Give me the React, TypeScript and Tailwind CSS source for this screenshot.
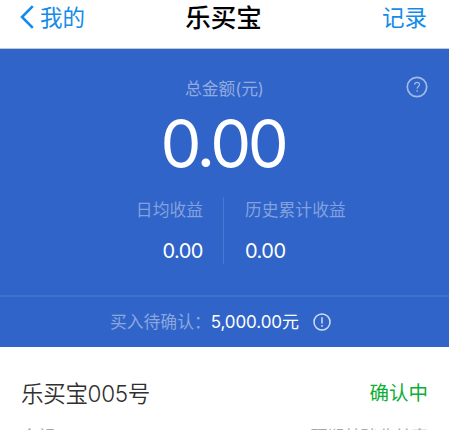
import React from 'react';

const BackIcon: React.FC = () => (
  <svg width="14" height="24" viewBox="0 0 14 24" fill="none" stroke="#148bea" strokeWidth="2.6">
    <path d="M12.8 1.2 2 12l10.8 10.8" />
  </svg>
);

const HelpIcon: React.FC = () => (
  <svg width="22" height="22" viewBox="0 0 22 22" fill="none" stroke="#a3b9e6" strokeWidth="1.7">
    <circle cx="11" cy="11" r="9.7" />
    <path d="M8.6 8.8c0-1.5 1-2.4 2.5-2.4s2.4.9 2.4 2.2c0 1.9-2.4 2-2.4 4.2" strokeWidth="1.2" />
    <path d="M11.1 14.3v1.5" strokeWidth="1.4" />
  </svg>
);

const NoticeIcon: React.FC = () => (
  <svg width="18" height="18" viewBox="0 0 18 18" fill="none" stroke="#d3def4" strokeWidth="1.5">
    <circle cx="9" cy="9" r="8" />
    <path d="M9 4.2v6.2M9 12v1.7" />
  </svg>
);

const App: React.FC = () => {
  return (
    <div className="h-[430px] w-[456px] overflow-hidden bg-white font-['Inter','Noto_Sans_CJK_SC',sans-serif]">
      <div className="w-[449px]">
        {/* Navigation */}
        <header className="grid h-[49px] grid-cols-3 border-b border-[#c3c8d4] pr-[22px] pl-[20px]">
          <div className="flex h-[34px] items-center text-[22.5px] text-[#148bea]">
            <BackIcon />
            <span className="ml-[6px] pt-[2px]">我的</span>
          </div>
          <h1 className="flex h-[37px] items-center justify-center text-[25.5px] font-medium whitespace-nowrap text-black">乐买宝</h1>
          <div className="flex h-[36px] items-center justify-end text-[22.5px] text-[#148bea]">记录</div>
        </header>

        {/* Balance */}
        <section className="h-[298px] bg-[#3064c8] text-white">
          <div className="flex h-[246px] flex-col pt-[27px]">
            <div className="grid h-6 grid-cols-[1fr_auto_1fr] items-center pr-[21px] pl-[21px]">
              <span />
              <span className="pt-px text-[16.8px] leading-6 tracking-[-0.1px] text-[#91abe0]">总金额(元)</span>
              <span className="flex justify-end pb-[3px]"><HelpIcon /></span>
            </div>
            <p className="mt-[7px] h-[72px] pr-[3px] text-center text-[65px] leading-[73px] font-[370] tracking-[-3.4px]">0.00</p>

            <div className="mt-[18px] flex h-[67px]">
              <div className="flex w-[223px] flex-col items-end pr-5">
                <span className="mt-px h-6 text-[16.8px] leading-6 text-[#83a1dd]">日均收益</span>
                <span className="mt-[17px] h-6 text-[20px] leading-6 font-[380] tracking-[-0.5px]">0.00</span>
              </div>
              <div className="w-px bg-[#4a78d0]" />
              <div className="flex flex-col pl-[21px]">
                <span className="mt-px h-6 text-[16.8px] leading-6 text-[#83a1dd]">历史累计收益</span>
                <span className="mt-[17px] h-6 text-[20px] leading-6 font-[380] tracking-[-0.5px]">0.00</span>
              </div>
            </div>
          </div>

          <div className="flex h-[52px] items-center border-t-2 border-[#4271cd] pl-[110px]">
            <span className="pt-[2px] text-[16.8px] text-[#8ba7df]">买入待确认：</span>
            <span className="pt-[2px] text-[17px] font-[390] tracking-[-0.1px]">5,000.00元</span>
            <span className="ml-[14px]"><NoticeIcon /></span>
          </div>
        </section>

        {/* Product */}
        <section className="pt-[31px] pr-[21px] pl-[21px]">
          <div className="flex h-8 items-center justify-between">
            <h2 className="text-[22.5px] font-[350] tracking-[-0.3px] text-[#303030]">乐买宝005号</h2>
            <span className="text-[19.5px] text-[#0cae35]">确认中</span>
          </div>
          <div className="mt-[15px] flex justify-between text-[16.8px] leading-6 text-[#a1a8ac]">
            <span>金额</span>
            <span>预期基础收益率</span>
          </div>
        </section>
      </div>
    </div>
  );
};

export default App;
